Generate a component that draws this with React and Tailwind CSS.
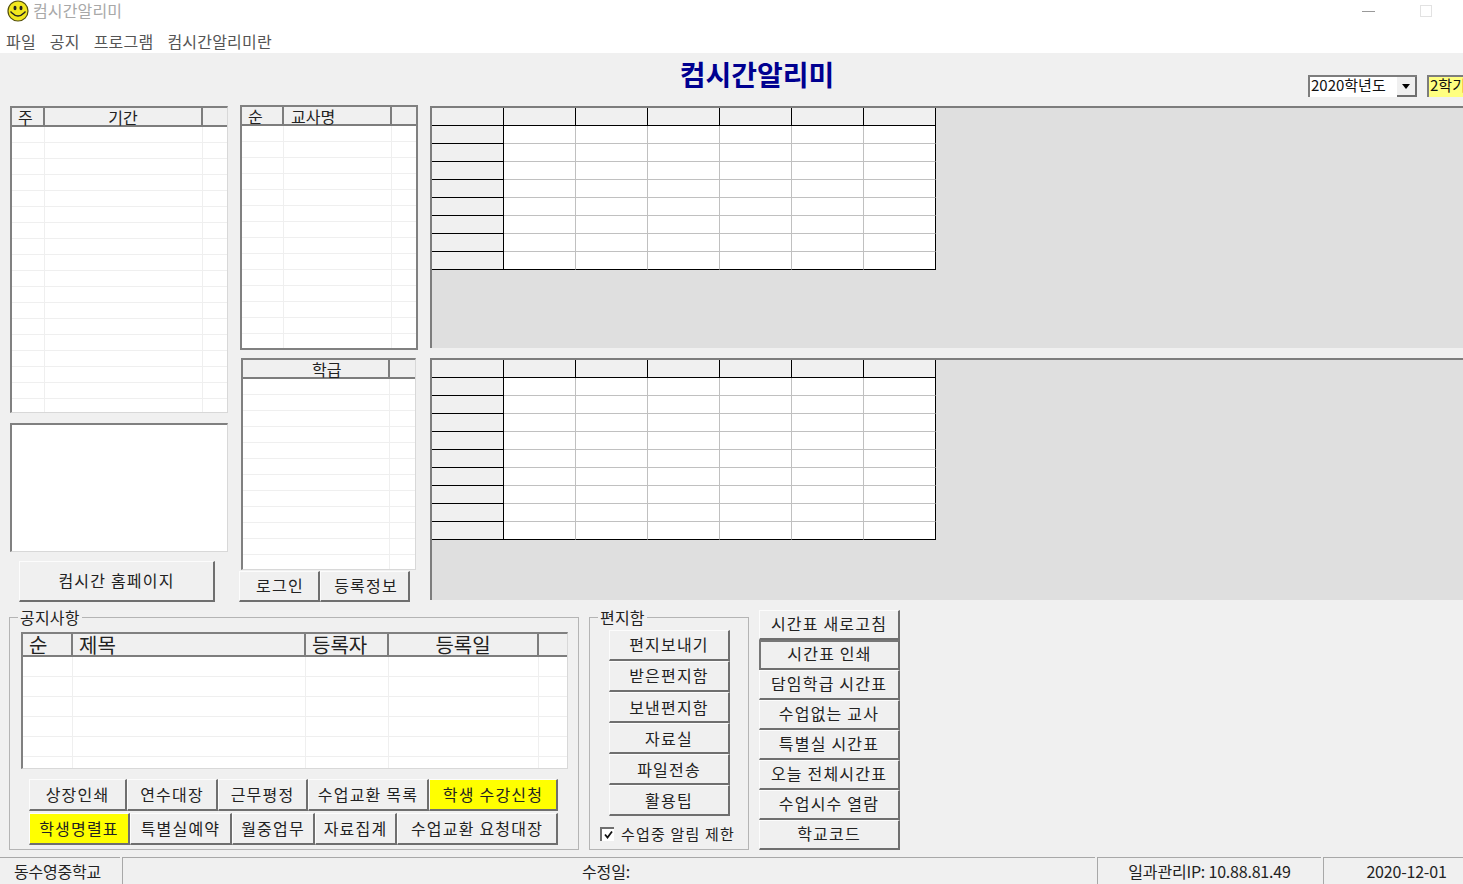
import React from "react";

const font = { fontFamily: '"Noto Sans CJK KR", "Noto Sans", sans-serif' };

// raised win32 style button
function Btn({ children, className = "", lift = "pb-[3px]" }) {
  return (
    <button className={`flex items-center justify-center ${lift} border border-[#fcfcfc] border-r-2 border-b-2 border-r-[#6f6f6f] border-b-[#6f6f6f] text-[16px] leading-none text-[#222] tracking-[1.2px] whitespace-nowrap ${className}`}>
      {children}
    </button>
  );
}

function Header({ col }) {
  return (
    <div
      style={{ width: col.w, paddingLeft: col.pad || 0 }}
      className={`shrink-0 h-full flex items-center border-r-2 border-[#7d7d7d] text-[#222] ${col.pad ? "justify-start" : "justify-center"}`}
    >
      {col.t}
    </div>
  );
}

// list grid with a grey header and faint row lines
function ListGrid({ cols, rowH, headH = 19, className = "", textClass = "text-[16px]", outer }) {
  return (
    <div className={`flex flex-col overflow-hidden bg-white ${outer} ${className}`}>
      <div style={{ height: headH }} className={`shrink-0 flex bg-[#f0f0f0] border-b-2 border-[#7d7d7d] leading-none ${textClass}`}>
        {cols.map((c, i) => (
          <Header key={i} col={c} />
        ))}
      </div>
      <div className="flex-1 flex flex-col overflow-hidden">
        {Array.from({ length: 24 }).map((_, i) => (
          <div key={i} style={{ height: rowH }} className="shrink-0 flex border-b border-[#efefef]">
            {cols.map((c, j) => (
              <div key={j} style={{ width: c.w }} className="shrink-0 border-r border-[#efefef]" />
            ))}
          </div>
        ))}
      </div>
    </div>
  );
}

// timetable grid, 7 columns with a frozen first column and header row
function Timetable({ rows, className = "" }) {
  return (
    <div className={`w-full bg-[#dfdfdf] border-t-2 border-l-2 border-[#7d7d7d] ${className}`}>
      <div className="w-[504px] flex flex-col">
        {Array.from({ length: rows + 1 }).map((_, r) => (
          <div key={r} className="flex h-[18px]">
            {Array.from({ length: 7 }).map((_, c) => {
              const fixed = r === 0 || c === 0;
              const right = c === 6 ? "border-r-black" : "border-r-[#c0c0c0]";
              const bottom = r === rows ? "border-b-black" : "border-b-[#c0c0c0]";
              return (
                <div
                  key={c}
                  className={`w-[72px] h-[18px] border-r border-b ${
                    fixed ? "bg-[#f0f0f0] border-black" : `bg-white ${right} ${bottom}`
                  }`}
                />
              );
            })}
          </div>
        ))}
      </div>
    </div>
  );
}

function GroupBox({ title, className = "", children }) {
  return (
    <div className={`relative border border-[#b4b4b4] ${className}`}>
      <span className="absolute left-[8px] top-[-10px] bg-[#f0f0f0] px-[2px] text-[16px] leading-[18px] tracking-[0.2px] text-[#222]">{title}</span>
      {children}
    </div>
  );
}

const yellow = "bg-[#ffff00]";
const sunken = "border-l-2 border-t-2 border-[#808080] border-r border-b border-r-[#d8d8d8] border-b-[#d8d8d8]";

export default function App() {
  const mail = ["편지보내기", "받은편지함", "보낸편지함", "자료실", "파일전송", "활용팁"];
  const side = ["시간표 새로고침", "시간표 인쇄", "담임학급 시간표", "수업없는 교사", "특별실 시간표", "오늘 전체시간표", "수업시수 열람", "학교코드"];

  return (
    <div style={font} className="w-[1463px] h-[884px] overflow-hidden bg-[#f0f0f0] flex flex-col text-[#222]">
      {/* title bar */}
      <div className="h-[28px] bg-white flex items-center pb-[6px] pl-[7px] shrink-0">
        <svg width="22" height="22" viewBox="0 0 22 22">
          <circle cx="11" cy="11" r="10" fill="#f2e71e" stroke="#55500a" strokeWidth="1.2" />
          <ellipse cx="8" cy="8" rx="1.5" ry="2.2" fill="#222" />
          <ellipse cx="14" cy="8" rx="1.5" ry="2.2" fill="#222" />
          <path d="M3.5 11.5 L5 13 Q11 19 17 13 L18.5 11.5" fill="none" stroke="#222" strokeWidth="1.4" />
        </svg>
        <span className="ml-[4px] mb-[2px] text-[16px] leading-none text-[#a8a8a8] tracking-[0.15px]">컴시간알리미</span>
        <div className="ml-auto mr-[31px] flex items-center gap-[45px]">
          <div className="w-[13px] h-px bg-[#999]" />
          <div className="w-[12px] h-[12px] border border-[#e2e2e2]" />
        </div>
      </div>
      {/* menu */}
      <div className="h-[25px] bg-white flex items-center pl-[6px] gap-[14px] text-[16px] leading-none tracking-[0.2px] text-[#555] shrink-0">
        <span>파일</span>
        <span>공지</span>
        <span>프로그램</span>
        <span>컴시간알리미란</span>
      </div>
      {/* heading row */}
      <div className="relative h-[52px] shrink-0 flex justify-center">
        <span className="mt-[5px] ml-[51px] text-[28px] leading-[32px] font-bold text-[#000090]">컴시간알리미</span>
        <div className="absolute left-[1308px] top-[22px] flex gap-[10px]">
          <div className="w-[109px] h-[22px] bg-white border-l-2 border-t-2 border-[#7d7d7d] flex items-center justify-between text-[15px] leading-none pl-px text-[#111]">
            <span className="pb-[5px]">2020학년도</span>
            <div className="w-[20px] h-[20px] bg-[#f0f0f0] border-r-2 border-b-2 border-[#6f6f6f] flex items-center justify-center">
              <div className="w-0 h-0 border-l-[4px] border-r-[4px] border-t-[5px] border-l-transparent border-r-transparent border-t-black" />
            </div>
          </div>
          <div className="w-[36px] h-[22px] bg-[#ffff80] border-l-2 border-t-2 border-[#7d7d7d] text-[15px] leading-[16px] pl-px overflow-hidden whitespace-nowrap text-[#111]">2학기</div>
        </div>
      </div>
      {/* upper area */}
      <div className="h-[500px] shrink-0 flex pl-[10px]">
        <div className="w-[218px] shrink-0 flex flex-col">
          <ListGrid
            className="mt-px h-[307px]"
            rowH={16}
            cols={[{ t: "주", w: 33, pad: 6 }, { t: "기간", w: 158 }, { t: "", w: 30 }]}
            outer={sunken}
          />
          <div className={`mt-[10px] h-[129px] bg-white ${sunken}`} />
          <Btn className="mt-[9px] ml-[9px] w-[196px] h-[41px]">컴시간 홈페이지</Btn>
        </div>
        <div className="ml-[12px] w-[178px] shrink-0 flex flex-col">
          <ListGrid
            className="h-[245px]"
            rowH={16}
            cols={[{ t: "순", w: 42, pad: 6 }, { t: "교사명", w: 108, pad: 7 }, { t: "", w: 30 }]}
            outer="border-2 border-[#808080]"
          />
          <ListGrid
            className="mt-[8px] ml-px h-[212px] w-[175px]"
            rowH={16}
            cols={[{ t: "학급", w: 147, pad: 69 }, { t: "", w: 30 }]}
            outer={sunken}
          />
          <div className="mt-px -ml-px flex h-[31px]">
            <Btn className="w-[81px] h-full pl-[2px]">로그인</Btn>
            <Btn className="w-[90px] h-full pl-[3px]">등록정보</Btn>
          </div>
        </div>
        <div className="ml-[12px] flex-1 flex flex-col">
          <Timetable rows={8} className="h-[242px] mt-px" />
          <Timetable rows={9} className="h-[242px] mt-[10px]" />
        </div>
      </div>
      {/* bottom area */}
      <div className="flex-1 flex pl-[9px] pt-[12px]">
        <GroupBox title="공지사항" className="w-[570px] h-[233px] flex flex-col">
          <ListGrid
            className="mt-[14px] ml-[11px] w-[547px] h-[137px]"
            rowH={20}
            headH={23}
            textClass="text-[20px]"
            cols={[
              { t: "순", w: 50, pad: 6 },
              { t: "제목", w: 233, pad: 6 },
              { t: "등록자", w: 83, pad: 6 },
              { t: "등록일", w: 150 },
              { t: "", w: 40 },
            ]}
            outer={sunken}
          />
          <div className="mt-[10px] ml-[19px] flex flex-col gap-[2px]">
            <div className="flex h-[32px]">
              <Btn lift="pb-px" className="w-[98px]">상장인쇄</Btn>
              <Btn lift="pb-px" className="w-[91px]">연수대장</Btn>
              <Btn lift="pb-px" className="w-[90px]">근무평정</Btn>
              <Btn lift="pb-px" className="w-[121px]">수업교환 목록</Btn>
              <Btn lift="pb-px" className={`w-[129px] ${yellow}`}>학생 수강신청</Btn>
            </div>
            <div className="flex h-[32px]">
              <Btn lift="pb-px" className={`w-[101px] ${yellow}`}>학생명렬표</Btn>
              <Btn lift="pb-px" className="w-[102px]">특별실예약</Btn>
              <Btn lift="pb-px" className="w-[83px]">월중업무</Btn>
              <Btn lift="pb-px" className="w-[82px]">자료집계</Btn>
              <Btn lift="pb-px" className="w-[161px]">수업교환 요청대장</Btn>
            </div>
          </div>
        </GroupBox>
        <GroupBox title="편지함" className="ml-[10px] w-[160px] h-[233px] flex flex-col">
          <div className="mt-[12px] ml-[19px] flex flex-col">
            {mail.map((t, i) => (
              <Btn key={t} lift={i < 2 ? "pb-[3px]" : "pb-px"} className="w-[121px] h-[31px]">{t}</Btn>
            ))}
          </div>
          <label className="mt-[10px] ml-[10px] flex items-center gap-[7px] text-[15px] leading-none tracking-[1.2px] whitespace-nowrap">
            <span className="w-[14px] h-[14px] bg-white border-l-2 border-t-2 border-[#6f6f6f] flex items-center justify-center">
              <svg width="9" height="9" viewBox="0 0 9 9"><path d="M1 4.5 L3.5 7.5 L8 1.5" fill="none" stroke="#111" strokeWidth="1.8" /></svg>
            </span>
            수업중 알림 제한
          </label>
        </GroupBox>
        <div className="ml-[10px] -mt-[7px] w-[141px] flex flex-col">
          {side.map((t, i) => (
            <Btn
              key={t}
              lift={i === 1 ? "pb-[5px]" : "pb-[3px]"}
              className={`w-[141px] h-[30px] ${i === 1 ? "border-2 border-[#6f6f6f] border-t-[#777] border-l-[#777]" : ""}`}
            >
              {t}
            </Btn>
          ))}
        </div>
      </div>
      {/* status bar */}
      <div className="h-[27px] shrink-0 flex gap-[2px] text-[16px] leading-none tracking-[-0.2px] text-[#222]">
        <div className="w-[120px] flex items-center pl-[14px] border-t border-[#a8a8a8]">동수영중학교</div>
        <div className="w-[973px] flex items-center justify-center border-t border-l border-[#a8a8a8]">
          <span className="ml-[-6px]">수정일:</span>
        </div>
        <div className="w-[224px] flex items-center justify-center border-t border-l border-[#a8a8a8]">일과관리IP: 10.88.81.49</div>
        <div className="flex-1 flex items-center justify-center pl-[26px] border-t border-l border-[#a8a8a8]">2020-12-01</div>
      </div>
    </div>
  );
}
